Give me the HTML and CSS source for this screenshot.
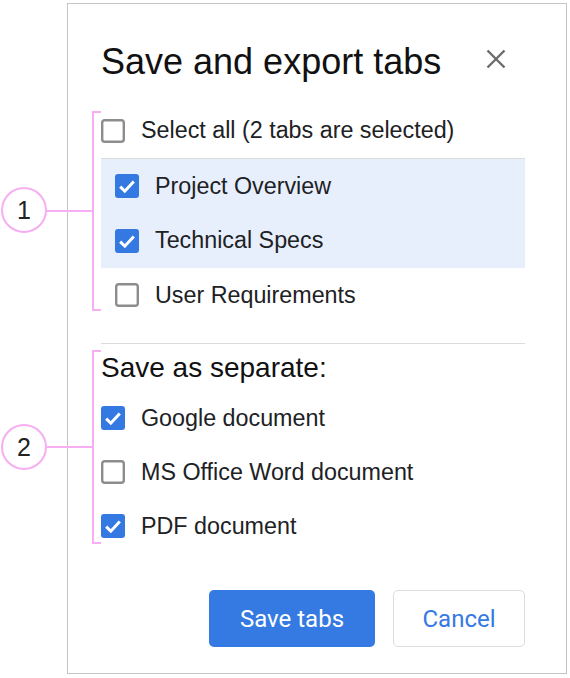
FILE: index.html
```html
<!DOCTYPE html>
<html lang="en">
<head>
<meta charset="utf-8">
<title>Save and export tabs</title>
<link rel="stylesheet" href="styles.css">
</head>
<body>
<div class="page">
  <div class="dialog">
    <div class="header">
      <h1 class="title">Save and export tabs</h1>
      <svg class="close" width="20" height="20" viewBox="0 0 20 20"><path d="M1.5 1.5L18.5 18.5M18.5 1.5L1.5 18.5" stroke="#6b6b6b" stroke-width="2.4" fill="none"/></svg>
    </div>

    <div class="row select-all">
      <svg class="cb" width="24" height="24" viewBox="0 0 24 24"><rect x="1.2" y="1.2" width="21.6" height="21.6" rx="2.6" fill="#fff" stroke="#8d8d8d" stroke-width="2.4"/></svg>
      <span>Select all (2 tabs are selected)</span>
    </div>
    <div class="tabs">
      <div class="row item selected">
        <svg class="cb" width="24" height="24" viewBox="0 0 24 24"><rect width="24" height="24" rx="3" fill="#3479e1"/><path d="M5.2 12.6L9.8 17.2L18.8 7.4" stroke="#fff" stroke-width="3" fill="none"/></svg>
        <span>Project Overview</span>
      </div>
      <div class="row item selected">
        <svg class="cb" width="24" height="24" viewBox="0 0 24 24"><rect width="24" height="24" rx="3" fill="#3479e1"/><path d="M5.2 12.6L9.8 17.2L18.8 7.4" stroke="#fff" stroke-width="3" fill="none"/></svg>
        <span>Technical Specs</span>
      </div>
      <div class="row item">
        <svg class="cb" width="24" height="24" viewBox="0 0 24 24"><rect x="1.2" y="1.2" width="21.6" height="21.6" rx="2.6" fill="#fff" stroke="#8d8d8d" stroke-width="2.4"/></svg>
        <span>User Requirements</span>
      </div>
    </div>

    <div class="divider"></div>

    <h2 class="subtitle">Save as separate:</h2>
    <div class="row fmt">
      <svg class="cb" width="24" height="24" viewBox="0 0 24 24"><rect width="24" height="24" rx="3" fill="#3479e1"/><path d="M5.2 12.6L9.8 17.2L18.8 7.4" stroke="#fff" stroke-width="3" fill="none"/></svg>
      <span>Google document</span>
    </div>
    <div class="row fmt">
      <svg class="cb" width="24" height="24" viewBox="0 0 24 24"><rect x="1.2" y="1.2" width="21.6" height="21.6" rx="2.6" fill="#fff" stroke="#8d8d8d" stroke-width="2.4"/></svg>
      <span>MS Office Word document</span>
    </div>
    <div class="row fmt">
      <svg class="cb" width="24" height="24" viewBox="0 0 24 24"><rect width="24" height="24" rx="3" fill="#3479e1"/><path d="M5.2 12.6L9.8 17.2L18.8 7.4" stroke="#fff" stroke-width="3" fill="none"/></svg>
      <span>PDF document</span>
    </div>

    <div class="actions">
      <button class="btn primary">Save tabs</button>
      <button class="btn secondary">Cancel</button>
    </div>
  </div>

  <div class="bracket bracket-1"></div>
  <div class="leader leader-1"></div>
  <div class="callout callout-1">1</div>

  <div class="bracket bracket-2"></div>
  <div class="leader leader-2"></div>
  <div class="callout callout-2">2</div>
</div>
</body>
</html>
```

FILE: styles.css
```css
* { box-sizing: border-box; }

html, body {
  margin: 0;
  padding: 0;
  background: #ffffff;
}

body {
  font-family: "Liberation Sans", Arial, sans-serif;
  color: #202124;
}

.page {
  position: relative;
  width: 570px;
  height: 678px;
  padding-top: 3px;
  padding-left: 67px;
}

.dialog {
  width: 500px;
  height: 671px;
  border: 1px solid #c4c4c4;
  background: #fff;
  padding: 37px 41px 0 33px;
}

.header {
  display: flex;
  justify-content: space-between;
  align-items: flex-start;
}

.title {
  margin: 0;
  font-size: 36px;
  line-height: 42px;
  font-weight: 400;
  color: #111;
}

.close {
  margin-top: 8px;
  margin-right: 19px;
}

.row {
  display: flex;
  align-items: center;
  gap: 16px;
  font-size: 23.3px;
}

.cb { flex: none; display: block; }

.select-all {
  margin-top: 20px;
  height: 56px;
  border-bottom: 1px solid #dcdcdc;
}

.item {
  height: 54.5px;
  padding-left: 14px;
}

.item.selected {
  background: #e8effc;
}

.divider {
  margin-top: 20.5px;
  height: 1px;
  background: #dcdcdc;
}

.subtitle {
  margin: 8px 0 7px;
  font-size: 28px;
  line-height: 32px;
  font-weight: 400;
  color: #111;
}

.fmt {
  height: 54px;
}

.actions {
  display: flex;
  justify-content: flex-end;
  gap: 18px;
  margin-top: 37px;
}

.btn {
  font-family: Roboto, "Liberation Sans", sans-serif;
  font-size: 24px;
  height: 57px;
  border-radius: 5px;
  cursor: pointer;
}

.primary {
  width: 166px;
  background: #347ae2;
  color: #fff;
  border: none;
}

.secondary {
  width: 132px;
  background: #fff;
  color: #3579e3;
  border: 1px solid #dcdcdc;
}

/* annotations */
.bracket {
  position: absolute;
  left: 92px;
  width: 9px;
  border: 2px solid #f7aef2;
  border-right: none;
}

.bracket-1 { top: 111px; height: 200px; }
.bracket-2 { top: 350px; height: 194px; }

.leader {
  position: absolute;
  left: 46px;
  width: 47px;
  height: 2px;
  background: #f7aef2;
}

.leader-1 { top: 210px; }
.leader-2 { top: 446px; }

.callout {
  position: absolute;
  left: 1px;
  width: 46px;
  height: 46px;
  border: 2px solid #f7aef2;
  border-radius: 50%;
  background: #fff;
  display: flex;
  align-items: center;
  justify-content: center;
  font-size: 25px;
  color: #222;
}

.callout-1 { top: 187px; }
.callout-2 { top: 424px; }
```
